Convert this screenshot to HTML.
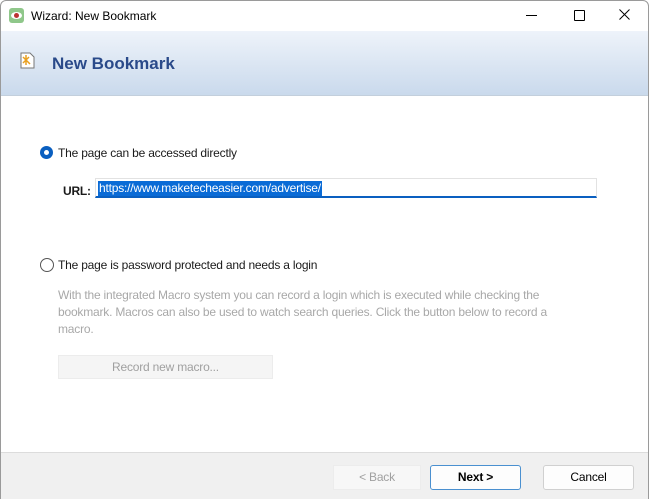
<!DOCTYPE html>
<html><head><style>
body{margin:0;width:649px;height:499px;overflow:hidden;background:#fff;font-family:"Liberation Sans",sans-serif;font-size:12px;letter-spacing:-0.2px;color:#1a1a1a;position:relative}
.a{position:absolute}
</style></head><body>
<div class="a" style="left:0;top:0;width:649px;height:499px;border:1px solid #9a9a9a;box-sizing:border-box;border-radius:6px 6px 0 0"></div>
<div class="a" style="left:9px;top:8px;width:15px;height:15px;background:#8fc78a;border-radius:3px"></div>
<div class="a" style="left:11px;top:12px;width:11px;height:7px;background:#fff;border-radius:50%"></div>
<div class="a" style="left:14px;top:13px;width:5px;height:5px;background:#b33;border-radius:50%"></div>
<div class="a" style="left:31px;top:9px;font-size:12px;color:#000;letter-spacing:0">Wizard: New Bookmark</div>
<div class="a" style="left:526px;top:15px;width:11px;height:1px;background:#000"></div>
<div class="a" style="left:574px;top:10px;width:9px;height:9px;border:1px solid #000;border-radius:1px"></div>
<svg class="a" style="left:619px;top:9px" width="11" height="11"><path d="M0.5 0.5L10.5 10.5M10.5 0.5L0.5 10.5" stroke="#000" stroke-width="1"/></svg>
<div class="a" style="left:1px;top:31px;width:647px;height:65px;background:linear-gradient(#eef3fa,#c9d9ec)"></div>
<div class="a" style="left:1px;top:95px;width:647px;height:1px;background:#c3cfdc"></div>
<svg class="a" style="left:20px;top:52px" width="16" height="18"><path d="M1 1H10L14 5V16H1Z" fill="#fff" stroke="#777"/><path d="M3 5L10 12M3 11L9 5M6 3V13" stroke="#e8a020" stroke-width="1.5"/></svg>
<div class="a" style="left:52px;top:54px;font-size:17px;font-weight:bold;color:#2a4a8a;letter-spacing:0">New Bookmark</div>
<div class="a" style="left:40px;top:146px;width:13px;height:13px;border-radius:50%;background:#0a5fc0"></div>
<div class="a" style="left:44px;top:150px;width:5px;height:5px;border-radius:50%;background:#fff"></div>
<div class="a" style="left:58px;top:146px">The page can be accessed directly</div>
<div class="a" style="left:63px;top:184px;font-weight:bold">URL:</div>
<div class="a" style="left:95px;top:178px;width:502px;height:20px;border:1px solid #e2e2e2;border-bottom:2px solid #0a5fc0;box-sizing:border-box"></div>
<div class="a" style="left:98px;top:181px;height:15px;padding:0 1px;background:#0a6bd6;color:#fff;line-height:15px">https://www.maketecheasier.com/advertise/</div>
<div class="a" style="left:40px;top:258px;width:12px;height:12px;border-radius:50%;border:1px solid #555"></div>
<div class="a" style="left:58px;top:258px">The page is password protected and needs a login</div>
<div class="a" style="left:58px;top:287px;width:510px;line-height:17px;color:#a8a8a8">With the integrated Macro system you can record a login which is executed while checking the bookmark. Macros can also be used to watch search queries. Click the button below to record a macro.</div>
<div class="a" style="left:58px;top:355px;width:215px;height:24px;background:#f5f5f5;border:1px solid #ececec;box-sizing:border-box;text-align:center;line-height:22px;color:#a0a0a0">Record new macro...</div>
<div class="a" style="left:1px;top:452px;width:647px;height:47px;background:#f0f0f0;border-top:1px solid #dcdcdc;box-sizing:border-box"></div>
<div class="a" style="left:333px;top:465px;width:88px;height:25px;background:#f7f7f7;border:1px solid #ececec;box-sizing:border-box;text-align:center;line-height:23px;color:#a0a0a0">&lt; Back</div>
<div class="a" style="left:430px;top:465px;width:91px;height:25px;background:#fdfdfd;border:1px solid #4a90d0;box-sizing:border-box;border-radius:3px;text-align:center;line-height:23px;font-weight:bold;color:#000">Next &gt;</div>
<div class="a" style="left:543px;top:465px;width:91px;height:25px;background:#fdfdfd;border:1px solid #d0d0d0;box-sizing:border-box;border-radius:3px;text-align:center;line-height:23px;color:#000">Cancel</div>
</body></html>
